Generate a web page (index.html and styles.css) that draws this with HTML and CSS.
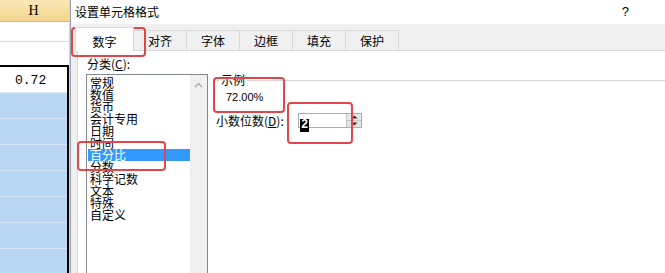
FILE: index.html
```html
<!DOCTYPE html>
<html lang="zh-CN">
<head>
    <meta charset="UTF-8">
    <meta name="viewport" content="width=device-width, initial-scale=1.0">
    <title>设置单元格格式</title>
    <link rel="stylesheet" href="styles.css">
</head>
<body>
    <div class="screen">
        <!-- Worksheet column H behind the dialog -->
        <div class="sheet">
            <div class="col-head">H</div>
            <div class="cell"></div>
            <div class="cell cell-tall"></div>
            <div class="selection">
                <div class="cell sel-first">0.72</div>
                <div class="cell sel-row"></div>
                <div class="cell sel-row"></div>
                <div class="cell sel-row"></div>
                <div class="cell sel-row"></div>
                <div class="cell sel-row"></div>
                <div class="cell sel-row"></div>
                <div class="cell sel-row"></div>
            </div>
        </div>

        <!-- Format cells dialog -->
        <div class="dialog">
            <div class="titlebar">
                <span>设置单元格格式</span>
                <span class="help">?</span>
            </div>

            <div class="tabs">
                <div class="tab active">数字</div>
                <div class="tab">对齐</div>
                <div class="tab">字体</div>
                <div class="tab">边框</div>
                <div class="tab">填充</div>
                <div class="tab">保护</div>
            </div>

            <div class="page">
                <div class="category">
                    <div class="field-label">分类(<u>C</u>):</div>
                    <div class="listbox">
                        <ul class="items">
                            <li>常规</li>
                            <li>数值</li>
                            <li>货币</li>
                            <li>会计专用</li>
                            <li>日期</li>
                            <li>时间</li>
                            <li class="selected">百分比</li>
                            <li>分数</li>
                            <li>科学记数</li>
                            <li>文本</li>
                            <li>特殊</li>
                            <li>自定义</li>
                        </ul>
                        <div class="scrollbar">
                            <svg class="chevron" width="9" height="6" viewBox="0 0 9 6">
                                <path d="M1 5 L4.5 1.5 L8 5" fill="none" stroke="#a6a6a6" stroke-width="1.2"/>
                            </svg>
                        </div>
                    </div>
                </div>

                <div class="options">
                    <fieldset class="sample">
                        <legend>示例</legend>
                        <div class="sample-value">72.00%</div>
                    </fieldset>

                    <div class="decimals">
                        <label class="decimals-label">小数位数(<u>D</u>):</label>
                        <div class="spin">
                            <div class="spin-text"><span class="spin-sel">2</span></div>
                            <div class="spin-btns">
                                <div class="spin-btn">
                                    <svg width="7" height="4" viewBox="0 0 7 4"><path d="M0.5 3.5 L3.5 0.5 L6.5 3.5 Z" fill="#333"/></svg>
                                </div>
                                <div class="spin-btn">
                                    <svg width="7" height="4" viewBox="0 0 7 4"><path d="M0.5 0.5 L3.5 3.5 L6.5 0.5 Z" fill="#333"/></svg>
                                </div>
                            </div>
                        </div>
                    </div>
                </div>
            </div>
        </div>
    </div>

    <!-- Red annotation frames drawn over the screenshot -->
    <div class="mark mark-tab"></div>
    <div class="mark mark-item"></div>
    <div class="mark mark-sample"></div>
    <div class="mark mark-spin"></div>
</body>
</html>
```

FILE: styles.css
```css
body {
    margin: 0;
    padding: 0;
    position: relative;
    width: 665px;
    height: 273px;
    overflow: hidden;
    background: #fff;
    font-family: "Noto Sans CJK SC", sans-serif;
    font-size: 12px;
    color: #000;
}

.screen {
    display: flex;
    height: 273px;
    overflow: hidden;
}

/* ---- worksheet ---- */
.sheet {
    width: 70px;
    flex-shrink: 0;
    border-right: 1px solid #d4d4d4;
    box-sizing: border-box;
    background: #fff;
    overflow: hidden;
}

.col-head {
    height: 21px;
    border-bottom: 1px solid #d9b56c;
    background: linear-gradient(#fae8b4, #f4d58e);
    text-align: center;
    font-family: "Liberation Serif", serif;
    font-size: 14px;
    line-height: 22px;
    padding-right: 2px;
}

.cell {
    height: 19px;
    border-bottom: 1px solid #dadada;
}

.cell-tall {
    height: 23px;
    border-bottom: 0;
}

.selection {
    border-top: 2px solid #000;
    border-right: 2px solid #000;
}

.sel-first {
    height: 25px;
    border-bottom: 1px solid #dfe7f0;
    padding-left: 15px;
    font-family: "Liberation Mono", monospace;
    font-size: 13px;
    line-height: 28px;
}

.sel-row {
    height: 25px;
    background: #b9d6f4;
    border-bottom: 1px solid #d6e6f7;
}

/* ---- dialog ---- */
.dialog {
    flex: 1;
    display: flex;
    flex-direction: column;
    border-left: 1px solid #9aa4b0;
    background: #f0f0f0;
    min-width: 0;
    overflow: hidden;
}

.titlebar {
    flex-shrink: 0;
    height: 24px;
    background: #fff;
    display: flex;
    align-items: center;
    justify-content: space-between;
    padding: 0 36px 0 4px;
    line-height: 20px;
}

.help {
    font-family: "Liberation Sans", sans-serif;
    font-size: 13px;
}

.tabs {
    flex-shrink: 0;
    height: 26px;
    display: flex;
    align-items: flex-end;
    padding-left: 4px;
}

.tab {
    box-sizing: border-box;
    width: 54px;
    height: 20px;
    margin-left: -1px;
    border: 1px solid #d9d9d9;
    border-bottom: 0;
    padding-top: 2px;
    line-height: 16px;
    text-align: center;
    background: #f0f0f0;
}

.tab.active {
    position: relative;
    z-index: 1;
    width: 59px;
    height: 24px;
    margin-left: 0;
    margin-bottom: -1px;
    padding-top: 6px;
    background: #fff;
}

.page {
    flex: 1;
    min-height: 0;
    display: flex;
    margin-left: 6px;
    border-left: 1px solid #d9d9d9;
    border-top: 1px solid #d9d9d9;
    background: #fff;
    padding-left: 8px;
}

/* category list */
.category {
    width: 122px;
    flex-shrink: 0;
}

.field-label {
    margin-top: 6px;
    margin-bottom: 3px;
    line-height: 14px;
    padding-left: 1px;
}

.listbox {
    box-sizing: border-box;
    width: 122px;
    height: 210px;
    border: 1px solid #828790;
    display: flex;
}

.items {
    flex: 1;
    list-style: none;
    margin: 0;
    padding: 2px 0 0 1px;
}

.items li {
    line-height: 12px;
    height: 12px;
    padding-left: 2px;
    white-space: nowrap;
}

.items li.selected {
    background: #3399ff;
    color: #fff;
}

.scrollbar {
    width: 17px;
    background: #f0f0f0;
    display: flex;
    justify-content: center;
    padding-top: 7px;
}

.chevron {
    display: block;
}

/* right side options */
.options {
    flex: 1;
    margin-left: 5px;
}

.sample {
    margin: 22px 0 0;
    padding: 0 0 0 6px;
    border: 0;
    border-top: 1px solid #d5d5d5;
    min-width: 0;
}

.sample legend {
    padding: 0 2px;
    line-height: 14px;
}

.sample-value {
    margin-left: 7px;
    padding-top: 4px;
    line-height: 12px;
    font-family: "Liberation Sans", sans-serif;
    font-size: 11px;
}

.decimals {
    display: flex;
    align-items: center;
    margin-top: 10px;
}

.decimals-label {
    width: 82px;
    padding-left: 3px;
    line-height: 15px;
}

.spin {
    box-sizing: border-box;
    width: 64px;
    height: 15px;
    border: 1px solid #abadb3;
    display: flex;
    background: #fff;
}

.spin-text {
    flex: 1;
    padding-left: 1px;
}

.spin-sel {
    display: inline-block;
    background: #000;
    color: #fff;
    font-family: "Liberation Mono", monospace;
    font-weight: bold;
    font-size: 12px;
    line-height: 13px;
    padding: 0 1px;
}

.spin-btns {
    width: 14px;
    border-left: 1px solid #c6c6c6;
    display: flex;
    flex-direction: column;
}

.spin-btn {
    flex: 1;
    display: flex;
    align-items: center;
    justify-content: center;
    background: #e6e6e6;
}

.spin-btn + .spin-btn {
    border-top: 1px solid #c6c6c6;
}

/* red annotation frames */
.mark {
    position: absolute;
    box-sizing: border-box;
    border: 2px solid #e2464b;
    border-radius: 4px;
}

.mark-tab { left: 71px; top: 27px; width: 75px; height: 30px; }
.mark-item { left: 77px; top: 141px; width: 89px; height: 30px; }
.mark-sample { left: 213px; top: 77px; width: 72px; height: 36px; }
.mark-spin { left: 287px; top: 102px; width: 66px; height: 42px; }
```
